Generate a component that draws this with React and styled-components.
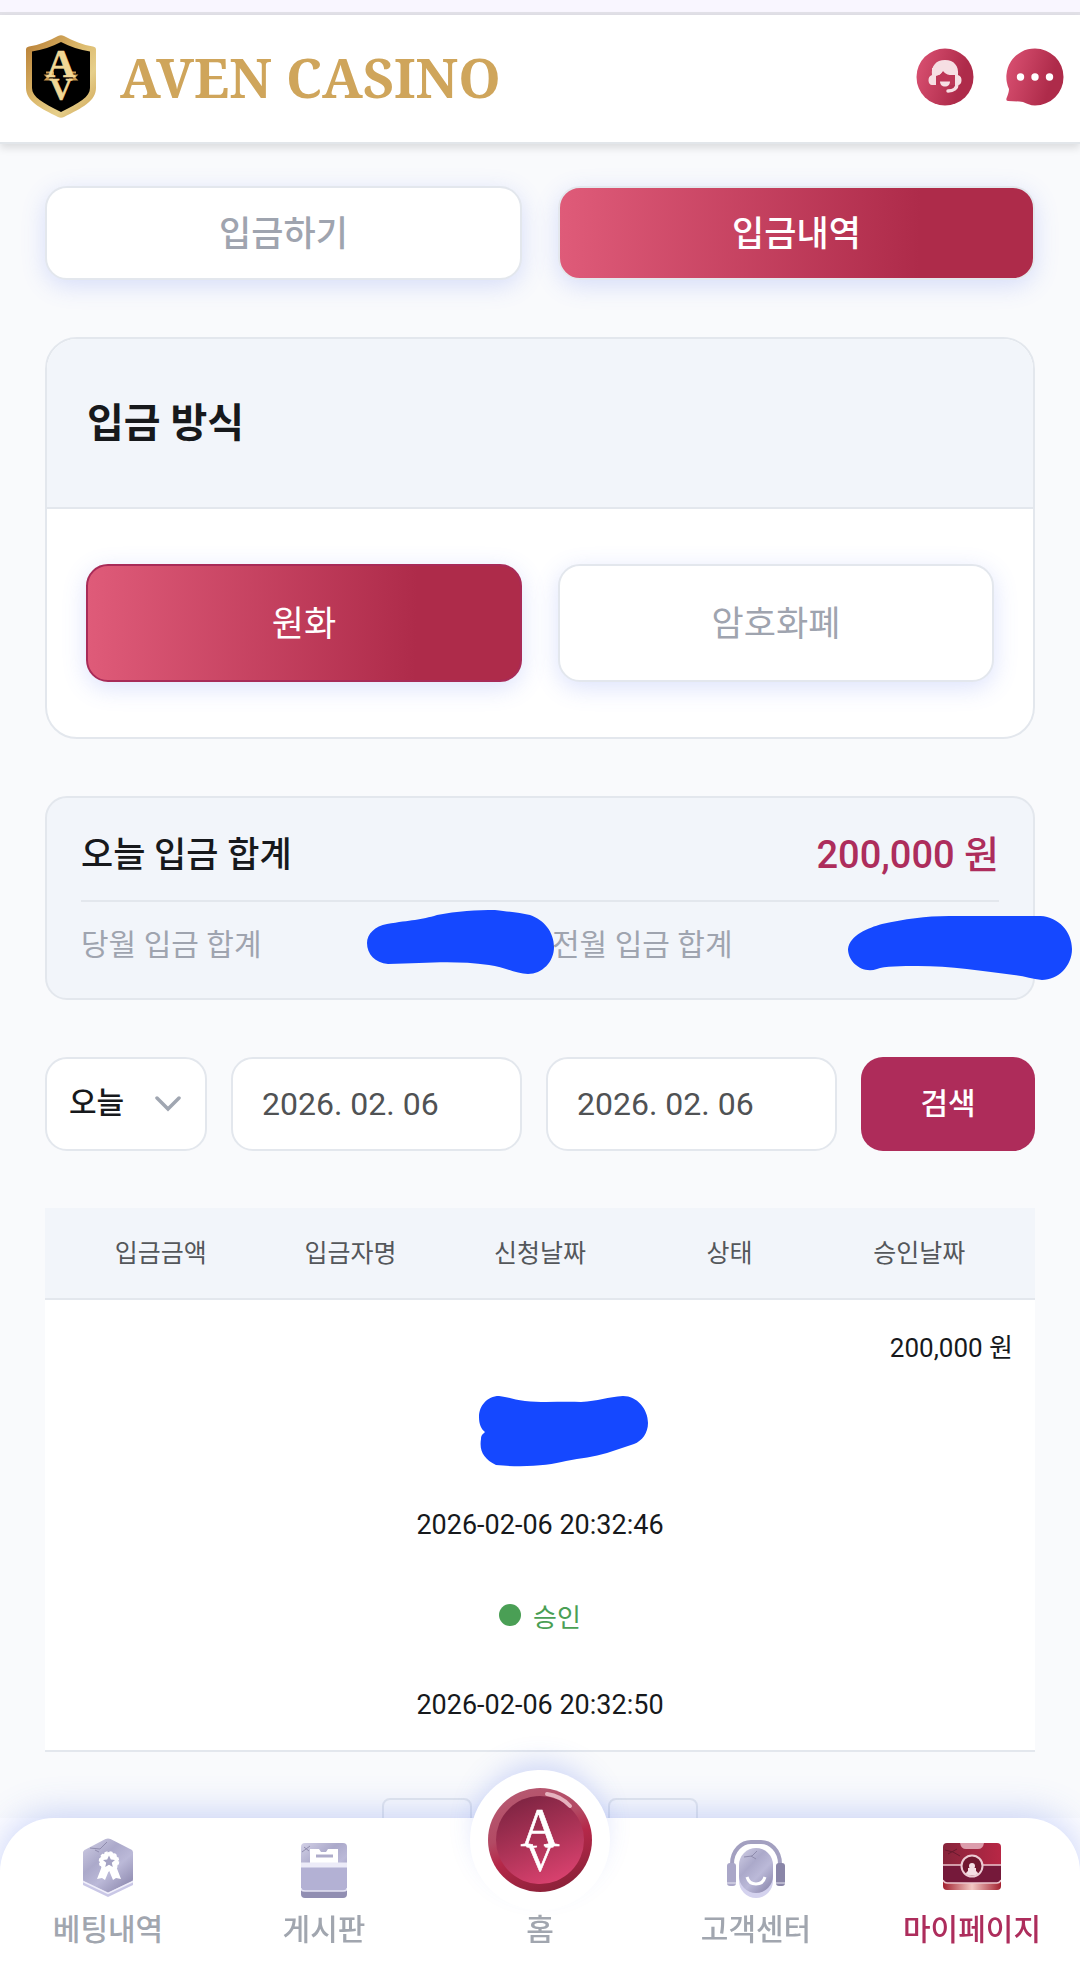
import React, { useState } from 'react';
import styled, { createGlobalStyle } from 'styled-components';

const GlobalStyle = createGlobalStyle`
  * {
    box-sizing: border-box;
  }

  body {
    margin: 0;
    background: #f9fafc;
    color: #17191c;
    font-family: Roboto, "Noto Sans CJK KR", sans-serif;
  }

  button, input, select {
    font-family: inherit;
    margin: 0;
  }
`;

const red = 'linear-gradient(91deg, #df5b79 0%, #ae2b4a 76%, #ae2b4a 100%)';
const line = '#e3e7ed';
const softShadow = '0 6px 24px rgba(80, 110, 240, 0.2)';

const StatusStrip = styled.div`
  height: 15px;
  background: #f9f6ff;
  border-bottom: 3px solid #e2e1e8;
`;

const Header = styled.header`
  display: flex;
  align-items: center;
  justify-content: space-between;
  height: 129px;
  padding: 0 16px 4px 26px;
  background: #fff;
  border-bottom: 2px solid #e2e6ea;
  box-shadow: 0 4px 8px rgba(0, 0, 0, 0.12);
`;

const Brand = styled.a`
  display: flex;
  align-items: center;
  gap: 24px;
  color: #cfa55b;
  font-family: "Noto Serif", "Liberation Serif", serif;
  font-size: 54px;
  font-weight: 700;
  line-height: 64px;
  text-decoration: none;
`;

const HeaderActions = styled.div`
  display: flex;
  gap: 32px;
`;

const IconButton = styled.button`
  display: flex;
  padding: 0;
  border: 0;
  background: none;
`;

const Main = styled.main`
  display: flex;
  flex-direction: column;
  gap: 57px;
  padding: 42px 45px 0;
`;

const TwoColumns = styled.div`
  display: grid;
  grid-template-columns: 1fr 1fr;
  gap: 36px;
`;

const Choice = styled.button`
  height: ${p => p.$tall ? 118 : 94}px;
  padding: 0 0 6px;
  border: 2px solid ${p => p.$active && p.$tall ? '#a82b58' : line};
  border-radius: 22px;
  background: ${p => p.$active ? red : '#fff'};
  box-shadow: ${softShadow};
  color: ${p => p.$active ? '#fff' : '#9fa4af'};
  font-size: 35px;
  font-weight: ${p => p.$tall ? 400 : 500};
`;

const Card = styled.section`
  overflow: hidden;
  border: 2px solid ${line};
  border-radius: 32px;
  background: #fff;
`;

const CardTitle = styled.h2`
  display: flex;
  align-items: center;
  height: 170px;
  margin: 0;
  padding: 0 40px 6px;
  border-bottom: 2px solid ${line};
  background: #f2f5fa;
  font-size: 40px;
  font-weight: 700;
`;

const CardBody = styled.div`
  padding: 55px 39px;
`;

const Summary = styled.section`
  padding: 10px 34px 0;
  height: 204px;
  border: 2px solid ${line};
  border-radius: 22px;
  background: #f2f5fa;
`;

const TodayRow = styled.div`
  display: flex;
  align-items: center;
  justify-content: space-between;
  height: 94px;
  padding-bottom: 6px;
  border-bottom: 2px solid ${line};
  font-size: 35px;
  font-weight: 500;
`;

const TodayAmount = styled.strong`
  color: #ad2d5c;
  font-size: 38px;
  font-weight: 500;
`;

const MonthRow = styled.div`
  display: grid;
  grid-template-columns: 1fr 1fr;
  gap: 24px;
  height: 84px;
`;

const MonthCell = styled.div`
  position: relative;
  display: flex;
  align-items: center;
  padding-bottom: 4px;
  color: #9fa4af;
  font-size: 30px;
`;

/* scribble that hides a private value */
const Mask = styled.svg`
  position: absolute;
  right: ${p => p.$right}px;
  top: ${p => p.$top}px;
`;

const Filters = styled.form`
  display: flex;
  gap: 24px;
`;

const SelectBox = styled.div`
  display: grid;
  grid-template-columns: 1fr 50px;
  align-items: center;
  width: 162px;
  border: 2px solid ${line};
  border-radius: 22px;
  background: #fff;

  svg {
    grid-area: 1 / 2;
    pointer-events: none;
  }
`;

const Select = styled.select`
  grid-area: 1 / 1 / 2 / 3;
  height: 90px;
  padding: 0 22px 4px;
  border: 0;
  background: transparent;
  color: #17191c;
  font-size: 30px;
  font-weight: 500;
  appearance: none;
`;

const DateInput = styled.input`
  flex: 1;
  min-width: 0;
  height: 94px;
  padding: 0 29px;
  border: 2px solid ${line};
  border-radius: 22px;
  background: #fff;
  color: #505254;
  font-size: 32px;
`;

const SearchButton = styled.button`
  width: 174px;
  padding: 0 0 6px;
  border: 0;
  border-radius: 22px;
  background: #ae2c5a;
  color: #fff;
  font-size: 30px;
  font-weight: 500;
`;

const Table = styled.table`
  display: block;
  font-size: 26px;
  border-bottom: 2px solid ${line};
  background: #fff;

  thead, tbody {
    display: block;
  }
`;

const HeadRow = styled.tr`
  display: grid;
  grid-template-columns: repeat(5, 1fr);
  align-items: center;
  height: 92px;
  padding: 0 21px 4px;
  border-bottom: 2px solid ${line};
  background: #f2f5fa;
  color: #54575b;

  th {
    padding: 0;
    font-size: 25px;
    font-weight: 400;
  }
`;

const BodyRow = styled.tr`
  display: flex;
  flex-direction: column;
`;

const Cell = styled.td`
  display: flex;
  align-items: center;
  justify-content: ${p => p.$align || 'center'};
  gap: 12px;
  height: 90px;
  padding: 0 22px;
  color: ${p => p.$color || 'inherit'};
  font-size: ${p => p.$date ? 27 : 26}px;
`;

const NameMask = styled.svg`
  margin: 0 0 8px 46px;
`;

const Dot = styled.span`
  width: 22px;
  height: 22px;
  border-radius: 50%;
  background: #4a9f55;
`;

const Pager = styled.div`
  display: flex;
  justify-content: center;
  gap: 23px;
  margin-top: -11px;
`;

const PageButton = styled.button`
  width: 90px;
  height: 90px;
  border: 2px solid ${line};
  border-radius: 8px;
  background: #f9fafc;
`;

const NavArea = styled.div`
  position: fixed;
  left: 0;
  right: 0;
  bottom: 0;
  background: #fdfdff;
`;

const Nav = styled.nav`
  display: grid;
  grid-template-columns: repeat(5, 1fr);
  grid-template-rows: 163px;
  border-radius: 54px 54px 0 0;
  background: #fff;
  box-shadow: 0 -4px 36px rgba(70, 105, 230, 0.28);
`;

const NavItem = styled.a`
  display: flex;
  flex-direction: column;
  align-items: center;
  justify-content: flex-end;
  gap: 10px;
  padding-bottom: 29px;
  color: ${p => p.$active ? '#ad2d5c' : '#a1a6af'};
  font-size: 30px;
  font-weight: 500;
  line-height: 44px;
  text-decoration: none;
`;

const HomeBadge = styled.span`
  display: flex;
  align-items: center;
  justify-content: center;
  width: 140px;
  height: 140px;
  margin-bottom: -12px;
  border-radius: 50%;
  background: #fff;
  box-shadow: 0 -14px 28px -8px rgba(70, 105, 230, 0.25);
`;

const IconSlot = styled.span`
  display: flex;
  align-items: flex-end;
  padding-bottom: ${p => p.$raised ? 8 : 0}px;
`;

const ShieldLogo = () => (
  <svg width="70" height="83" viewBox="0 0 70 83" aria-hidden="true">
    <defs>
      <linearGradient id="gold" x1="0" y1="0" x2="1" y2="1">
        <stop offset="0" stopColor="#b67a31" />
        <stop offset=".45" stopColor="#dcb96c" />
        <stop offset=".7" stopColor="#e6cf8b" />
        <stop offset="1" stopColor="#cda04f" />
      </linearGradient>
    </defs>
    <path d="M32 1q3-1.500 6 0c9 5 19 9 29 10.500q3 .500 3 3V53c0 13-14 20-32 29q-3 1.500-6 0C14 73 0 66 0 53V14.500q0-2.500 3-3C13 10 23 6 32 1z" fill="url(#gold)" />
    <path d="M35 7c9 4.500 19 8 29 9.500V53c0 9-11 15-29 24C17 68 6 62 6 53V16.500C16 15 26 11.500 35 7z" fill="#000" />
    <path d="M20 37.500h7v3h-7l2 2-2 2h7M50 37.500h-7v3h7l-2 2 2 2h-7" fill="none" stroke="#c9974e" strokeWidth="2" />
    <text x="35" y="42" textAnchor="middle" fontFamily="Liberation Serif, serif" fontSize="40" fill="#f1d795" stroke="#f1d795" strokeWidth=".6">A</text>
    <text x="35" y="65" textAnchor="middle" fontFamily="Liberation Serif, serif" fontSize="32" fill="#f1d795" stroke="#f1d795" strokeWidth=".6">V</text>
  </svg>
);

const SupportIcon = () => (
  <svg width="58" height="58" viewBox="0 0 58 58" aria-hidden="true">
    <defs>
      <linearGradient id="rose" x1="0" y1=".3" x2="1" y2=".6">
        <stop offset="0" stopColor="#d84f70" />
        <stop offset=".8" stopColor="#ae2b4a" />
      </linearGradient>
    </defs>
    <circle cx="29" cy="29" r="28.500" fill="url(#rose)" />
    {/* hair and ear cups, then the face cut out in the background red */}
    <path d="M16 27C15 18 20 12 29 12s14 6 13 15c3 1 3.500 3 3.500 5.500S44 37 42 37h-3V27H20v10h-4c-2 0-3.500-2-3.500-4.500S13 28 16 27z" fill="#f6dfe3" />
    <path d="M20 37v-9c3-.5 5-2 7-5 2 3 6 4.500 12 4.500V37z" fill="#bd3757" />
    <path d="M16 28V20h24v7c-6 0-10-1.500-13-4.500-2 3-4 5-7 5.500z" fill="#f6dfe3" />
    <path d="M41 36c0 4-3 7-9 7" fill="none" stroke="#f6dfe3" strokeWidth="3.500" strokeLinecap="round" />
    <path d="M24 33.500h10c0 3-2 5-5 5s-5-2-5-5z" fill="#f6dfe3" />
  </svg>
);

const ChatIcon = () => (
  <svg width="58" height="58" viewBox="0 0 58 58" aria-hidden="true">
    <path d="M29 .5A28.500 28.500 0 1 1 29 57.500c-5 0-8-2-12-3.500-5-1-10-.5-15-1-2 0-2-2-1-4 1-3 2-5 2-8A28.500 28.500 0 0 1 29 .5z" fill="url(#rose)" />
    <circle cx="14.500" cy="29" r="3.700" fill="#fff" />
    <circle cx="29" cy="29" r="3.700" fill="#fff" />
    <circle cx="43.500" cy="29" r="3.700" fill="#fff" />
  </svg>
);

const BetsIcon = () => (
  <svg width="52" height="60" viewBox="0 0 52 60" aria-hidden="true">
    <defs>
      <linearGradient id="lilac" x1="0" y1="0" x2=".8" y2="1">
        <stop offset="0" stopColor="#d2d0e6" />
        <stop offset=".4" stopColor="#aba9ca" />
        <stop offset=".65" stopColor="#bbb9d8" />
        <stop offset="1" stopColor="#8f8bb0" />
      </linearGradient>
    </defs>
    <path d="M26 6L51 18v29L26 59 1 47V18z" fill="#c9c7e6" />
    <path d="M23.500 1q2.500-1 5 0L50 12q1 1 1 2.500V41q0 1.500-1.500 2.500L26 54.500 2.500 43.500Q1 42.500 1 41V14.500Q1 13 2.500 12z" fill="url(#lilac)" />
    <path d="M1 43.500l25 12 25-12" fill="none" stroke="#f0effa" strokeWidth="1.500" />
    <path d="M8 10l10 1 7-7M13 12l4 2" fill="none" stroke="#8f8cad" />
    <path d="M20 28l-5 13 5-1 3 2 5-12zM34 28l5 13-5-1-3 2-5-12z" fill="#fff" />
    <circle cx="27" cy="23.500" r="9.500" fill="#fff" stroke="#fff" strokeWidth="1.500" strokeDasharray="3 2" />
    <path d="M27 17.500l1.800 4 4.200.4-3.200 2.800 1 4.300-3.800-2.300-3.800 2.300 1-4.300-3.200-2.800 4.200-.4z" fill="#a4a2c3" />
  </svg>
);

const BoardIcon = () => (
  <svg width="46" height="55" viewBox="0 0 46 55" aria-hidden="true">
    <rect y="5" width="46" height="50" rx="4" fill="#918eb2" />
    <rect width="46" height="48" rx="4" fill="url(#lilac)" />
    <path d="M9 6h9l2 3h5l2-3h10v18H9z" fill="#fff" />
    <path d="M15 13h17" stroke="#aeacca" strokeWidth="3" />
    <path d="M0 21h46v24q0 3-3 3H3q-3 0-3-3z" fill="#b3b1d4" />
    <path d="M0 22h46" stroke="#ecebf8" strokeWidth="5" />
    <path d="M0 45q0 3 4 3h38q4 0 4-3" fill="none" stroke="#e5e4f4" strokeWidth="1.500" />
    <path d="M1 9l8-6M3 4l5 4" stroke="#8f8cad" />
  </svg>
);

const HomeIcon = () => (
  <svg width="104" height="104" viewBox="0 0 104 104" aria-hidden="true">
    <defs>
      <linearGradient id="rim" x1=".2" y1="0" x2=".6" y2="1">
        <stop offset="0" stopColor="#b65a72" />
        <stop offset=".4" stopColor="#b34a64" />
        <stop offset=".6" stopColor="#b52849" />
        <stop offset="1" stopColor="#8c2139" />
      </linearGradient>
      <linearGradient id="face" x1=".2" y1="0" x2=".6" y2="1">
        <stop offset="0" stopColor="#7b2341" />
        <stop offset=".5" stopColor="#a93255" />
        <stop offset="1" stopColor="#d8416e" />
      </linearGradient>
    </defs>
    <circle cx="52" cy="52" r="52" fill="url(#rim)" />
    <circle cx="52" cy="52" r="44" fill="url(#face)" />
    <path d="M59 6q14 2 23 12" fill="none" stroke="#e6b3bf" strokeWidth="4" strokeLinecap="round" />
    <text x="52" y="58" textAnchor="middle" fontFamily="Liberation Serif, serif" fontSize="54" fill="#fff" stroke="#fff" strokeWidth=".6">A</text>
    <text x="52" y="83" textAnchor="middle" fontFamily="Liberation Serif, serif" fontSize="38" fill="#fff" stroke="#fff" strokeWidth=".6">V</text>
  </svg>
);

const CenterIcon = () => (
  <svg width="58" height="58" viewBox="0 0 58 58" aria-hidden="true">
    <path d="M5 26v-2C5 10 15 2 24 2h10c9 0 19 8 19 22v2" fill="none" stroke="#a3a0c0" strokeWidth="4" />
    <rect x="12" y="12" width="34" height="46" rx="17" fill="#d4d2ee" />
    <rect x="12" y="8" width="34" height="45" rx="17" fill="url(#lilac)" />
    <path d="M17 17l8-1 5-5M24 16l5 3" fill="none" stroke="#8f8cad" />
    <path d="M20 37q2 7 9 7t9-7" fill="none" stroke="#fff" strokeWidth="3" />
    <rect y="23" width="9" height="23" rx="3" fill="#aaa7c8" />
    <rect x="49" y="23" width="9" height="23" rx="3" fill="#8a86a8" />
    <path d="M0 43h9M49 43h9" stroke="#e8e7f4" />
  </svg>
);

const MyPageIcon = () => (
  <svg width="58" height="47" viewBox="0 0 58 47" aria-hidden="true">
    <defs>
      <linearGradient id="base">
        <stop offset="0" stopColor="#a3202f" />
        <stop offset=".5" stopColor="#f3c9c4" />
        <stop offset="1" stopColor="#a3202f" />
      </linearGradient>
      <linearGradient id="box" x1="0" y1="0" x2="1" y2="0">
        <stop offset="0" stopColor="#87243b" />
        <stop offset="1" stopColor="#b82745" />
      </linearGradient>
    </defs>
    <rect y="10" width="58" height="37" rx="4" fill="url(#base)" />
    <rect width="58" height="40" rx="4" fill="url(#box)" />
    <path d="M0 22h58v15q0 3-4 3H4q-4 0-4-3z" fill="#75193a" />
    <path d="M17 0h24q-1 6-6 6H23q-5 0-6-6z" fill="#dc9dac" />
    <path d="M0 22h58M0 37q1 3 4 3h50q3 0 4-3" fill="none" stroke="#ecc5cd" strokeWidth="1.500" />
    <path d="M2 7l8 2 7 4M5 11l9-5" fill="none" stroke="#691a2e" />
    <circle cx="29" cy="23" r="10.500" fill="#71172f" stroke="#eccbd3" strokeWidth="2" />
    <circle cx="29" cy="23" r="3" fill="#f5dfe4" />
    <path d="M25 25h8v3q2 1 2 3-6 3-12 0 0-2 2-3z" fill="#f5dfe4" />
  </svg>
);

const navItems = [
  { label: '베팅내역', icon: <BetsIcon /> },
  { label: '게시판', icon: <BoardIcon /> },
  { label: '홈', icon: <HomeBadge><HomeIcon /></HomeBadge> },
  { label: '고객센터', icon: <CenterIcon /> },
  { label: '마이페이지', icon: <MyPageIcon />, current: true },
];

const columns = ['입금금액', '입금자명', '신청날짜', '상태', '승인날짜'];

const App = () => {
  const [tab, setTab] = useState('입금내역');
  const [method, setMethod] = useState('원화');

  return (
    <>
      <GlobalStyle />
      <StatusStrip />
      <Header>
        <Brand href="#">
          <ShieldLogo />
          AVEN CASINO
        </Brand>
        <HeaderActions>
          <IconButton aria-label="고객센터"><SupportIcon /></IconButton>
          <IconButton aria-label="메시지"><ChatIcon /></IconButton>
        </HeaderActions>
      </Header>

      <Main>
        <TwoColumns>
          {['입금하기', '입금내역'].map(name => (
            <Choice key={name} $active={tab === name} onClick={() => setTab(name)}>{name}</Choice>
          ))}
        </TwoColumns>

        <Card>
          <CardTitle>입금 방식</CardTitle>
          <CardBody>
            <TwoColumns>
              {['원화', '암호화폐'].map(name => (
                <Choice key={name} $tall $active={method === name} onClick={() => setMethod(name)}>{name}</Choice>
              ))}
            </TwoColumns>
          </CardBody>
        </Card>

        <Summary>
          <TodayRow>
            <span>오늘 입금 합계</span>
            <TodayAmount>200,000 원</TodayAmount>
          </TodayRow>
          <MonthRow>
            <MonthCell>
              당월 입금 합계
              <Mask $right={-26} $top={8} width="187" height="64" viewBox="0 0 187 64" aria-hidden="true">
                <path d="M20 14c24-4 34-4 50-9 20-4 40-5 58-5 17 2 25 3 35 5 14 5 24 17 24 32s-12 27-26 27c-12 0-23-7-39-9-35-5-62-2-101-1C8 53 0 44 0 33c0-9 8-17 20-19z" fill="#1548ff" />
              </Mask>
            </MonthCell>
            <MonthCell>
              전월 입금 합계
              <Mask $right={-73} $top={14} width="224" height="64" viewBox="0 0 224 64" aria-hidden="true">
                <path d="M34 8C57 3 77 0 101 0h88c20-1 35 15 35 33 0 17-14 31-30 31-10-1-18-4-28-5-30-4-64-9-96-9-16 0-34 0-41 3C14 58 0 46 0 33 2 19 20 12 34 8z" fill="#1548ff" />
              </Mask>
            </MonthCell>
          </MonthRow>
        </Summary>

        <Filters onSubmit={e => e.preventDefault()}>
          <SelectBox>
            <Select aria-label="기간" defaultValue="오늘">
              <option>오늘</option>
            </Select>
            <svg width="26" height="16" viewBox="0 0 26 16" aria-hidden="true">
              <path d="M2 2l11 11L24 2" fill="none" stroke="#a0a6b1" strokeWidth="3.500" strokeLinecap="round" />
            </svg>
          </SelectBox>
          <DateInput aria-label="시작일" defaultValue="2026. 02. 06" />
          <DateInput aria-label="종료일" defaultValue="2026. 02. 06" />
          <SearchButton>검색</SearchButton>
        </Filters>

        <Table>
          <thead>
            <HeadRow>
              {columns.map(name => <th key={name} scope="col">{name}</th>)}
            </HeadRow>
          </thead>
          <tbody>
            <BodyRow>
              <Cell $align="flex-end">200,000 원</Cell>
              <Cell>
                <NameMask width="169" height="71" viewBox="0 0 169 71" aria-hidden="true">
                  <path d="M20 0c10 1 15 4 26 5 20 2 37 0 56 1 17-1 27-5 42-6 14 0 25 13 25 27 0 10-6 18-14 21l-27 9c-13 4-26 5-41 8-16 4-40 7-70 4C5 63 0 55 2 43c0-4 2-5 4-7-4-3-6-8-6-15C0 10 8 0 20 0z" fill="#1548ff" />
                </NameMask>
              </Cell>
              <Cell $date>2026-02-06 20:32:46</Cell>
              <Cell $color="#4a9f55"><Dot />승인</Cell>
              <Cell $date>2026-02-06 20:32:50</Cell>
            </BodyRow>
          </tbody>
        </Table>

        <Pager>
          <PageButton aria-label="이전" />
          <PageButton aria-label="현재" />
          <PageButton aria-label="다음" />
        </Pager>
      </Main>

      <NavArea>
        <Nav>
          {navItems.map(item => (
            <NavItem key={item.label} href="#" $active={item.current}>
              <IconSlot $raised={item.current}>{item.icon}</IconSlot>
              {item.label}
            </NavItem>
          ))}
        </Nav>
      </NavArea>
    </>
  );
};

export default App;
